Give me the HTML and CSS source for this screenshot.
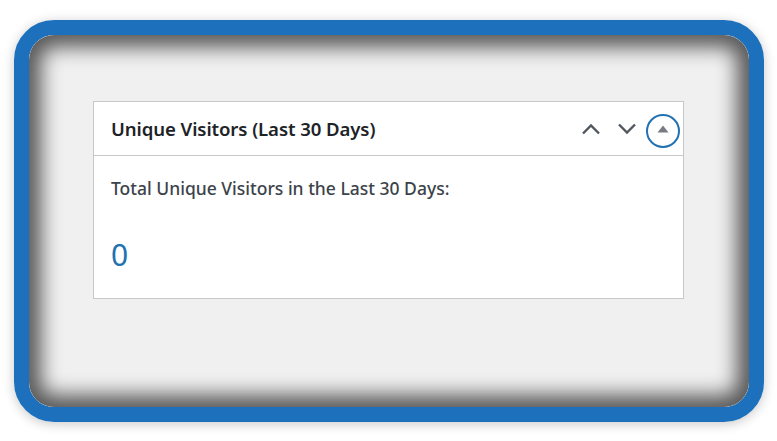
FILE: index.html
```html
<!DOCTYPE html>
<html>
<head>
<meta charset="utf-8">
<link rel="stylesheet" href="styles.css">
</head>
<body>
<div class="frame">
  <div class="screen">
    <div class="card">
      <div class="card-head">
        <h2 class="card-title">Unique Visitors (Last 30 Days)</h2>
        <div class="actions">
          <span class="btn">
            <svg width="20" height="12" viewBox="0 0 20 12"><path d="M2 10.5 L10 2.5 L18 10.5" fill="none" stroke="#50575e" stroke-width="2.4"/></svg>
          </span>
          <span class="btn">
            <svg width="20" height="12" viewBox="0 0 20 12"><path d="M2 1.5 L10 9.5 L18 1.5" fill="none" stroke="#50575e" stroke-width="2.4"/></svg>
          </span>
          <span class="btn">
            <span class="ring">
              <svg width="12" height="8" viewBox="0 0 12 8"><path d="M0.5 7.5 L6 0.5 L11.5 7.5 Z" fill="#787c82"/></svg>
            </span>
          </span>
        </div>
      </div>
      <div class="card-body">
        <p class="label">Total Unique Visitors in the Last 30 Days:</p>
        <p class="count">0</p>
      </div>
    </div>
  </div>
</div>
</body>
</html>
```

FILE: styles.css
```css
html, body {
  margin: 0;
  padding: 0;
  background: #ffffff;
}
body {
  padding: 20px 13px 19px 14px;
  font-family: "Noto Sans", "Open Sans", sans-serif;
}
.frame {
  width: 750px;
  height: 402px;
  box-sizing: border-box;
  border: 15px solid #1d71bc;
  border-radius: 40px;
  box-shadow: 0 2px 12px rgba(0, 0, 0, 0.22);
}
.screen {
  height: 100%;
  box-sizing: border-box;
  border-radius: 25px;
  background: #f0f0f0;
  box-shadow: inset 0 0 20px 12px #575757;
  padding: 66px 0 0 64px;
}
.card {
  width: 591px;
  height: 198px;
  box-sizing: border-box;
  background: #fff;
  border: 1px solid #c8c8c8;
}
.card-head {
  height: 53px;
  border-bottom: 1px solid #c8c8c8;
  display: flex;
  align-items: center;
  justify-content: space-between;
  padding: 0 2px 0 17px;
}
.card-title {
  margin: 0;
  font-size: 18.6px;
  font-weight: 600;
  color: #1d2327;
  letter-spacing: -0.1px;
}
.actions {
  display: flex;
  align-items: center;
}
.btn {
  width: 36px;
  height: 36px;
  display: flex;
  align-items: center;
  justify-content: center;
}
.ring {
  width: 34px;
  height: 34px;
  box-sizing: border-box;
  border: 2px solid #2271b1;
  border-radius: 50%;
  display: flex;
  align-items: center;
  justify-content: center;
  margin-top: 5px;
}
.ring svg {
  margin-top: -5px;
}
.card-body {
  padding: 20px 17px 0 17px;
}
.label {
  margin: 0;
  font-size: 17.5px;
  font-weight: 500;
  color: #3c434a;
  line-height: 24px;
}
.count {
  margin: 37px 0 0 0;
  font-size: 30px;
  color: #2271b1;
  line-height: 36px;
}
```
